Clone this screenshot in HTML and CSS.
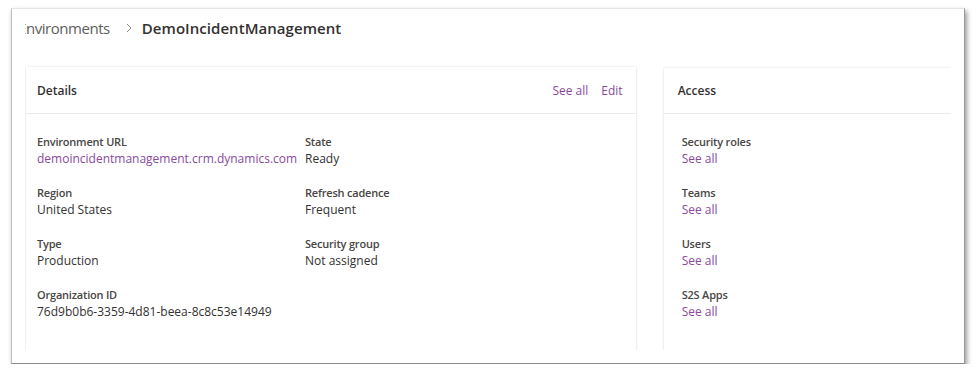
FILE: index.html
```html
<!DOCTYPE html>
<html lang="en">
<head>
<meta charset="utf-8">
<title>DemoIncidentManagement</title>
<link rel="stylesheet" href="styles.css">
</head>
<body>
<div class="page">
  <div class="frame">
    <div class="shot">
      <div class="breadcrumb">
        <span class="crumb">Environments</span>
        <svg class="sep" width="6" height="10" viewBox="0 0 6 10" aria-hidden="true"><path d="M1 1 L5 5 L1 9" fill="none" stroke="#8a8886" stroke-width="1"/></svg>
        <span class="current">DemoIncidentManagement</span>
      </div>
      <div class="cards">
        <section class="card details">
          <header class="card-head">
            <h2>Details</h2>
            <div class="actions"><a>See all</a><a>Edit</a></div>
          </header>
          <div class="card-body grid">
            <div class="field"><div class="label">Environment URL</div><div class="value link">demoincidentmanagement.crm.dynamics.com</div></div>
            <div class="field"><div class="label">State</div><div class="value">Ready</div></div>
            <div class="field"><div class="label">Region</div><div class="value">United States</div></div>
            <div class="field"><div class="label">Refresh cadence</div><div class="value">Frequent</div></div>
            <div class="field"><div class="label">Type</div><div class="value">Production</div></div>
            <div class="field"><div class="label">Security group</div><div class="value">Not assigned</div></div>
            <div class="field"><div class="label">Organization ID</div><div class="value">76d9b0b6-3359-4d81-beea-8c8c53e14949</div></div>
          </div>
        </section>
        <section class="card access">
          <header class="card-head">
            <h2>Access</h2>
          </header>
          <div class="card-body list">
            <div class="field"><div class="label">Security roles</div><div class="value link">See all</div></div>
            <div class="field"><div class="label">Teams</div><div class="value link">See all</div></div>
            <div class="field"><div class="label">Users</div><div class="value link">See all</div></div>
            <div class="field"><div class="label">S2S Apps</div><div class="value link">See all</div></div>
          </div>
        </section>
      </div>
    </div>
  </div>
</div>
</body>
</html>
```
FILE: styles.css
```css
html, body {
  margin: 0;
  padding: 0;
  background: #ffffff;
}

body {
  font-family: "Open Sans", "Noto Sans", sans-serif;
  color: #323130;
}

.page {
  padding: 8px 0 0 11px;
}

.frame {
  width: 939px;
  height: 354px;
  border: 1px solid #bdbdbd;
  border-top-color: #e4e4e4;
  border-right-color: #9a9a9a;
  border-bottom-color: #8a8a8a;
  box-shadow: 2px 3px 5px rgba(0, 0, 0, 0.4);
  background: #fff;
  padding: 0 0 0 13px;
  display: flex;
}

.shot {
  width: 926px;
  height: 341px;
  overflow: hidden;
  background: #fff;
}

.breadcrumb {
  display: flex;
  align-items: center;
  height: 37px;
  white-space: nowrap;
  font-size: 15px;
}

.crumb {
  color: #605e5c;
  margin-left: -7px;
  letter-spacing: -0.45px;
}

.sep {
  margin: 1px 10px 0 16px;
}

.current {
  color: #323130;
  font-weight: 600;
  letter-spacing: 0.05px;
}

.cards {
  display: flex;
  align-items: flex-start;
  gap: 28px;
  padding: 21px 0 0 1px;
}

.card {
  background: #fff;
  box-shadow: 0 0 2px rgba(0, 0, 0, 0.12), 0 1px 3px rgba(0, 0, 0, 0.06);
  height: 300px;
}

.details {
  width: 611px;
}

.access {
  width: 288px;
  margin-top: 1px;
}

.card-head {
  display: flex;
  align-items: center;
  justify-content: space-between;
  height: 46px;
  border-bottom: 1px solid #edebe9;
  padding: 0 13px 0 11px;
}

.access .card-head {
  height: 45px;
  padding-left: 14px;
}

.card-head h2 {
  margin: 0;
  font-size: 12px;
  font-weight: 600;
  color: #323130;
}

.actions {
  display: flex;
  gap: 13px;
  font-size: 12px;
}

.actions a,
.link {
  color: #8a4a9b;
}

.card-body {
  padding: 19px 0 0 11px;
}

.grid {
  display: grid;
  grid-template-columns: 268px 1fr;
  row-gap: 17px;
}

.list {
  display: flex;
  flex-direction: column;
  gap: 17px;
  padding-left: 18px;
}

.label {
  font-size: 11px;
  font-weight: 600;
  line-height: 17px;
  letter-spacing: -0.2px;
  color: #484644;
}

.value {
  font-size: 12px;
  line-height: 17px;
  color: #323130;
  white-space: nowrap;
}

.value.link {
  color: #8a4a9b;
}
```
